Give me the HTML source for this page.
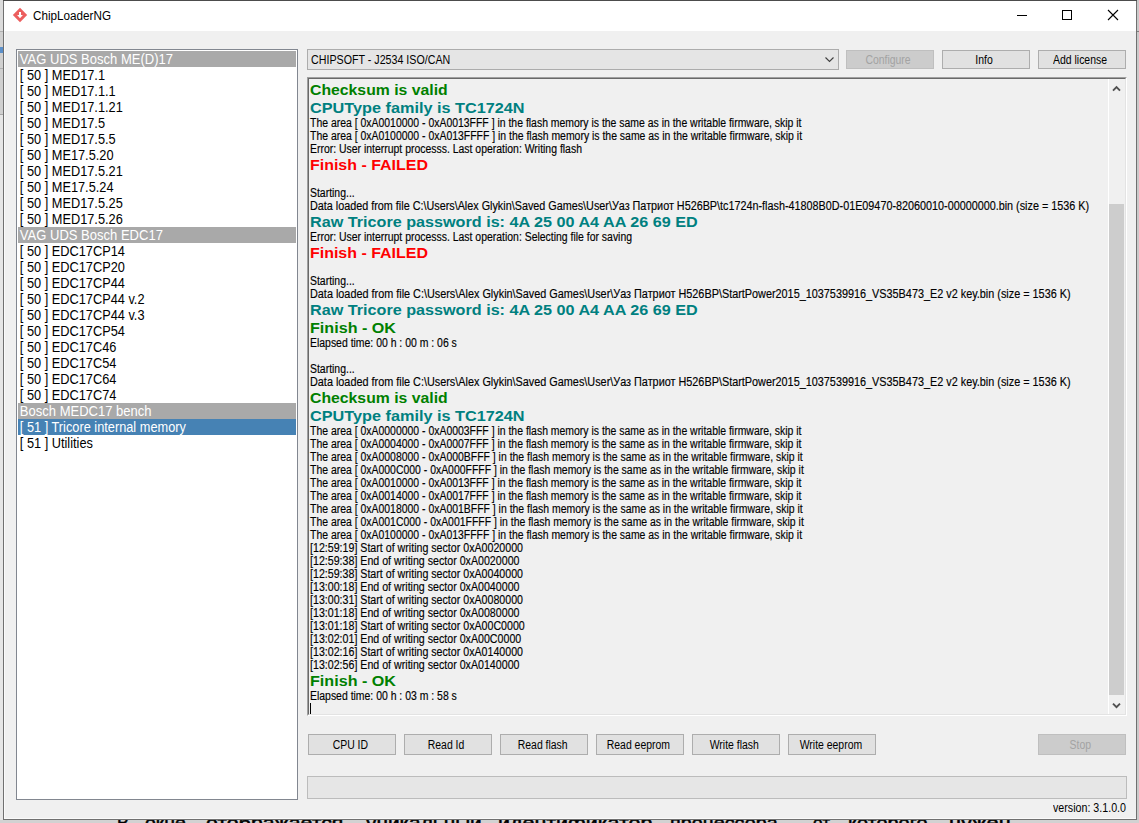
<!DOCTYPE html>
<html><head><meta charset="utf-8"><title>ChipLoaderNG</title><style>
*{margin:0;padding:0;box-sizing:border-box}
html,body{width:1139px;height:823px;overflow:hidden;background:#e4e4e4;font-family:"Liberation Sans",sans-serif}
.a{position:absolute}
.t{position:absolute;white-space:pre;transform-origin:0 0}
#win{position:absolute;left:3px;top:0;width:1134px;height:820px;border:1px solid #707070;background:#f0f0f0}
#title{position:absolute;left:4px;top:1px;width:1132px;height:30px;background:#fff}
.btn{position:absolute;height:21px;width:88px;background:#e1e1e1;border:1px solid #adadad;font-size:12px;color:#000;text-align:center;line-height:19px}
.btn span{display:inline-block;transform:scaleX(0.87);position:relative;left:-1.5px;top:1px}
.dis{background:#cccccc;border-color:#bfbfbf;color:#a3a3a3}
.li{position:absolute;left:18px;width:278px;height:16px;font-size:14px;line-height:16px;white-space:pre;color:#000}
.li span{display:inline-block;transform-origin:0 0;transform:scaleX(0.912);padding-left:2px}
.hd{background:#a9a9a9;color:#fff}
.hd span{transform:scaleX(0.93)}
.sel{background:#4682b4;color:#fff}
.ln{position:absolute;left:311px;white-space:pre;transform-origin:0 0}
.n{font-size:12px;line-height:13px;height:13px;color:#000;-webkit-text-stroke:0.15px #000}
.b{font-size:15px;font-weight:bold;line-height:18px;height:18px;letter-spacing:0px}
.g{color:#008000}.c{color:#008080}.r{color:#ff0000}
</style></head>
<body>
<div class="a" style="left:0;top:0;width:3px;height:823px;background:#e6e6e6"></div><div class="a" style="left:0;top:0;width:3px;height:31px;background:#dcdcdc"></div><div class="a" style="left:0;top:31px;width:3px;height:83px;background:#d0d0d0"></div><div class="a" style="left:0;top:31px;width:3px;height:1px;background:#b0b0b0"></div><div class="a" style="left:0;top:47px;width:3px;height:6px;background:#5b8fc9"></div><div class="a" style="left:0;top:68px;width:3px;height:1px;background:#b0b0b0"></div><div class="a" style="left:0;top:114px;width:3px;height:1px;background:#a8a8a8"></div><div class="a" style="left:1137px;top:0;width:2px;height:823px;background:#cacaca"></div><div class="a" style="left:1137px;top:31px;width:2px;height:1px;background:#808080"></div><div class="a" style="left:0;top:820px;width:1139px;height:3px;background:#d2d2d2"></div><div id="win"></div><div class="a" style="left:3px;top:0;width:1134px;height:1px;background:#4c4c4c"></div><div class="a" style="left:4px;top:818px;width:1132px;height:1px;background:#fafafa"></div><div class="a" style="left:4px;top:31px;width:1px;height:787px;background:#fafafa"></div><div id="title"></div><svg class="a" style="left:12px;top:7px" width="16" height="16" viewBox="0 0 16 16"><path d="M8 0.8 L15.2 8 L8 15.2 L0.8 8 Z" fill="#ec5e5e"/><path d="M7 5.1 H9 V8 H10.9 L8 11.3 L5.1 8 H7 Z" fill="#fff"/></svg><div class="t" style="left:33px;top:8px;font-size:12px;line-height:16px;color:#000;transform:scaleX(0.975)">ChipLoaderNG</div><div class="a" style="left:1017px;top:15px;width:10px;height:1px;background:#000"></div><div class="a" style="left:1062px;top:10px;width:10px;height:10px;border:1px solid #000"></div><svg class="a" style="left:1107px;top:9px" width="12" height="12" viewBox="0 0 12 12"><path d="M1 1 L11 11 M11 1 L1 11" stroke="#000" stroke-width="1.1"/></svg><div class="a" style="left:16px;top:49px;width:282px;height:751px;border:1px solid #828790;background:#fff"></div><div class="li hd" style="top:51px"><span>VAG UDS Bosch ME(D)17</span></div><div class="li " style="top:67px"><span>[ 50 ] MED17.1</span></div><div class="li " style="top:83px"><span>[ 50 ] MED17.1.1</span></div><div class="li " style="top:99px"><span>[ 50 ] MED17.1.21</span></div><div class="li " style="top:115px"><span>[ 50 ] MED17.5</span></div><div class="li " style="top:131px"><span>[ 50 ] MED17.5.5</span></div><div class="li " style="top:147px"><span>[ 50 ] ME17.5.20</span></div><div class="li " style="top:163px"><span>[ 50 ] MED17.5.21</span></div><div class="li " style="top:179px"><span>[ 50 ] ME17.5.24</span></div><div class="li " style="top:195px"><span>[ 50 ] MED17.5.25</span></div><div class="li " style="top:211px"><span>[ 50 ] MED17.5.26</span></div><div class="li hd" style="top:227px"><span>VAG UDS Bosch EDC17</span></div><div class="li " style="top:243px"><span>[ 50 ] EDC17CP14</span></div><div class="li " style="top:259px"><span>[ 50 ] EDC17CP20</span></div><div class="li " style="top:275px"><span>[ 50 ] EDC17CP44</span></div><div class="li " style="top:291px"><span>[ 50 ] EDC17CP44 v.2</span></div><div class="li " style="top:307px"><span>[ 50 ] EDC17CP44 v.3</span></div><div class="li " style="top:323px"><span>[ 50 ] EDC17CP54</span></div><div class="li " style="top:339px"><span>[ 50 ] EDC17C46</span></div><div class="li " style="top:355px"><span>[ 50 ] EDC17C54</span></div><div class="li " style="top:371px"><span>[ 50 ] EDC17C64</span></div><div class="li " style="top:387px"><span>[ 50 ] EDC17C74</span></div><div class="li hd" style="top:403px"><span>Bosch MEDC17 bench</span></div><div class="li sel" style="top:419px"><span>[ 51 ] Tricore internal memory</span></div><div class="li " style="top:435px"><span>[ 51 ] Utilities</span></div><div class="a" style="left:307px;top:49px;width:532px;height:21px;background:#e5e5e5;border:1px solid #acacac"></div><div class="t" style="left:311px;top:54px;font-size:12px;line-height:13px;color:#000;transform:scaleX(0.89)">CHIPSOFT - J2534 ISO/CAN</div><svg class="a" style="left:825px;top:57px" width="9" height="6" viewBox="0 0 9 6"><path d="M0.5 0.5 L4.5 4.5 L8.5 0.5" fill="none" stroke="#404040" stroke-width="1.1"/></svg><div class="btn dis" style="left:846px;top:50px;height:19px;line-height:17px"><span>Configure</span></div><div class="btn" style="left:942px;top:50px;height:19px;line-height:17px"><span>Info</span></div><div class="btn" style="left:1038px;top:50px;height:19px;line-height:17px"><span>Add license</span></div><div class="a" style="left:307px;top:77px;width:820px;height:639px;border-top:1px solid #a0a0a0;border-left:1px solid #a0a0a0;border-right:1px solid #fff;border-bottom:1px solid #fff"></div><div class="a" style="left:308px;top:78px;width:818px;height:637px;border-top:1px solid #696969;border-left:1px solid #696969;border-right:1px solid #e3e3e3;border-bottom:1px solid #e3e3e3;background:#f0f0f0"></div><div class="a" style="left:1108px;top:79px;width:1px;height:635px;background:#fff"></div><div class="a" style="left:1109px;top:204px;width:15px;height:491px;background:#cdcdcd"></div><svg class="a" style="left:1112px;top:84px" width="9" height="8" viewBox="0 0 9 8"><path d="M1 6.6 L4.5 3 L8 6.6" fill="none" stroke="#505050" stroke-width="1.9"/></svg><svg class="a" style="left:1112px;top:702px" width="9" height="8" viewBox="0 0 9 8"><path d="M1 1.6 L4.5 5.2 L8 1.6" fill="none" stroke="#505050" stroke-width="1.9"/></svg><div class="a" style="left:309px;top:79px;width:799px;height:635px;overflow:hidden"><div class="ln b g" style="left:1px;top:2.4px;transform:scaleX(1.052)">Checksum is valid</div><div class="ln b c" style="left:1px;top:20.4px;transform:scaleX(1.083)">CPUType family is TC1724N</div><div class="ln n" style="left:1px;top:38.4px;transform:scaleX(0.87)">The area [ 0xA0010000 - 0xA0013FFF ] in the flash memory is the same as in the writable firmware, skip it</div><div class="ln n" style="left:1px;top:51.4px;transform:scaleX(0.87)">The area [ 0xA0100000 - 0xA013FFFF ] in the flash memory is the same as in the writable firmware, skip it</div><div class="ln n" style="left:1px;top:64.4px;transform:scaleX(0.87)">Error: User interrupt processs. Last operation: Writing flash</div><div class="ln b r" style="left:1px;top:77.4px;transform:scaleX(1.064)">Finish - FAILED</div><div class="ln n" style="left:1px;top:108.4px;transform:scaleX(0.87)">Starting...</div><div class="ln n" style="left:1px;top:121.4px;transform:scaleX(0.9)">Data loaded from file C:\Users\Alex Glykin\Saved Games\User\Уаз Патриот H526BP\tc1724n-flash-41808B0D-01E09470-82060010-00000000.bin (size = 1536 K)</div><div class="ln b c" style="left:1px;top:134.4px;transform:scaleX(1.078)">Raw Tricore password is: 4A 25 00 A4 AA 26 69 ED</div><div class="ln n" style="left:1px;top:152.4px;transform:scaleX(0.87)">Error: User interrupt processs. Last operation: Selecting file for saving</div><div class="ln b r" style="left:1px;top:165.4px;transform:scaleX(1.064)">Finish - FAILED</div><div class="ln n" style="left:1px;top:196.4px;transform:scaleX(0.87)">Starting...</div><div class="ln n" style="left:1px;top:209.4px;transform:scaleX(0.904)">Data loaded from file C:\Users\Alex Glykin\Saved Games\User\Уаз Патриот H526BP\StartPower2015_1037539916_VS35B473_E2 v2 key.bin (size = 1536 K)</div><div class="ln b c" style="left:1px;top:222.4px;transform:scaleX(1.078)">Raw Tricore password is: 4A 25 00 A4 AA 26 69 ED</div><div class="ln b g" style="left:1px;top:240.4px;transform:scaleX(1.075)">Finish - OK</div><div class="ln n" style="left:1px;top:258.4px;transform:scaleX(0.87)">Elapsed time: 00 h : 00 m : 06 s</div><div class="ln n" style="left:1px;top:284.4px;transform:scaleX(0.87)">Starting...</div><div class="ln n" style="left:1px;top:297.4px;transform:scaleX(0.904)">Data loaded from file C:\Users\Alex Glykin\Saved Games\User\Уаз Патриот H526BP\StartPower2015_1037539916_VS35B473_E2 v2 key.bin (size = 1536 K)</div><div class="ln b g" style="left:1px;top:310.4px;transform:scaleX(1.052)">Checksum is valid</div><div class="ln b c" style="left:1px;top:328.4px;transform:scaleX(1.083)">CPUType family is TC1724N</div><div class="ln n" style="left:1px;top:346.4px;transform:scaleX(0.87)">The area [ 0xA0000000 - 0xA0003FFF ] in the flash memory is the same as in the writable firmware, skip it</div><div class="ln n" style="left:1px;top:359.4px;transform:scaleX(0.87)">The area [ 0xA0004000 - 0xA0007FFF ] in the flash memory is the same as in the writable firmware, skip it</div><div class="ln n" style="left:1px;top:372.4px;transform:scaleX(0.87)">The area [ 0xA0008000 - 0xA000BFFF ] in the flash memory is the same as in the writable firmware, skip it</div><div class="ln n" style="left:1px;top:385.4px;transform:scaleX(0.87)">The area [ 0xA000C000 - 0xA000FFFF ] in the flash memory is the same as in the writable firmware, skip it</div><div class="ln n" style="left:1px;top:398.4px;transform:scaleX(0.87)">The area [ 0xA0010000 - 0xA0013FFF ] in the flash memory is the same as in the writable firmware, skip it</div><div class="ln n" style="left:1px;top:411.4px;transform:scaleX(0.87)">The area [ 0xA0014000 - 0xA0017FFF ] in the flash memory is the same as in the writable firmware, skip it</div><div class="ln n" style="left:1px;top:424.4px;transform:scaleX(0.87)">The area [ 0xA0018000 - 0xA001BFFF ] in the flash memory is the same as in the writable firmware, skip it</div><div class="ln n" style="left:1px;top:437.4px;transform:scaleX(0.87)">The area [ 0xA001C000 - 0xA001FFFF ] in the flash memory is the same as in the writable firmware, skip it</div><div class="ln n" style="left:1px;top:450.4px;transform:scaleX(0.87)">The area [ 0xA0100000 - 0xA013FFFF ] in the flash memory is the same as in the writable firmware, skip it</div><div class="ln n" style="left:1px;top:463.4px;transform:scaleX(0.887)">[12:59:19] Start of writing sector 0xA0020000</div><div class="ln n" style="left:1px;top:476.4px;transform:scaleX(0.887)">[12:59:38] End of writing sector 0xA0020000</div><div class="ln n" style="left:1px;top:489.4px;transform:scaleX(0.887)">[12:59:38] Start of writing sector 0xA0040000</div><div class="ln n" style="left:1px;top:502.4px;transform:scaleX(0.887)">[13:00:18] End of writing sector 0xA0040000</div><div class="ln n" style="left:1px;top:515.4px;transform:scaleX(0.887)">[13:00:31] Start of writing sector 0xA0080000</div><div class="ln n" style="left:1px;top:528.4px;transform:scaleX(0.887)">[13:01:18] End of writing sector 0xA0080000</div><div class="ln n" style="left:1px;top:541.4px;transform:scaleX(0.887)">[13:01:18] Start of writing sector 0xA00C0000</div><div class="ln n" style="left:1px;top:554.4px;transform:scaleX(0.887)">[13:02:01] End of writing sector 0xA00C0000</div><div class="ln n" style="left:1px;top:567.4px;transform:scaleX(0.887)">[13:02:16] Start of writing sector 0xA0140000</div><div class="ln n" style="left:1px;top:580.4px;transform:scaleX(0.887)">[13:02:56] End of writing sector 0xA0140000</div><div class="ln b g" style="left:1px;top:593.4px;transform:scaleX(1.075)">Finish - OK</div><div class="ln n" style="left:1px;top:611.4px;transform:scaleX(0.87)">Elapsed time: 00 h : 03 m : 58 s</div><div class="a" style="left:1px;top:624px;width:1px;height:11px;background:#000"></div></div><div class="btn" style="left:308px;top:734px"><span>CPU ID</span></div><div class="btn" style="left:404px;top:734px"><span>Read Id</span></div><div class="btn" style="left:500px;top:734px"><span>Read flash</span></div><div class="btn" style="left:596px;top:734px"><span>Read eeprom</span></div><div class="btn" style="left:692px;top:734px"><span>Write flash</span></div><div class="btn" style="left:788px;top:734px"><span>Write eeprom</span></div><div class="btn dis" style="left:1038px;top:734px"><span>Stop</span></div><div class="a" style="left:307px;top:776px;width:820px;height:23px;background:#e6e6e6;border:1px solid #bcbcbc"></div><div class="t" style="left:1053px;top:802px;font-size:12px;line-height:13px;color:#000;transform:scaleX(0.89)">version: 3.1.0.0</div><div class="a" style="left:0;top:820px;width:1139px;height:3px;overflow:hidden"><div class="t" style="left:117px;top:-9px;font-size:21px;line-height:24px;color:#000;-webkit-text-stroke:0.6px #000;width:10px;overflow:visible"><span style="display:inline-block;transform-origin:0 0;transform:scaleX(0.862)">В</span></div><div class="t" style="left:145px;top:-9px;font-size:21px;line-height:24px;color:#000;-webkit-text-stroke:0.6px #000;width:43px;overflow:visible"><span style="display:inline-block;transform-origin:0 0;transform:scaleX(0.927)">окне</span></div><div class="t" style="left:206px;top:-9px;font-size:21px;line-height:24px;color:#000;-webkit-text-stroke:0.6px #000;width:141px;overflow:visible"><span style="display:inline-block;transform-origin:0 0;transform:scaleX(1.013)">отображается</span></div><div class="t" style="left:366px;top:-9px;font-size:21px;line-height:24px;color:#000;-webkit-text-stroke:0.6px #000;width:115px;overflow:visible"><span style="display:inline-block;transform-origin:0 0;transform:scaleX(0.991)">уникальный</span></div><div class="t" style="left:498px;top:-9px;font-size:21px;line-height:24px;color:#000;-webkit-text-stroke:0.6px #000;width:154px;overflow:visible"><span style="display:inline-block;transform-origin:0 0;transform:scaleX(1.021)">идентификатор</span></div><div class="t" style="left:670px;top:-9px;font-size:21px;line-height:24px;color:#000;-webkit-text-stroke:0.6px #000;width:120px;overflow:visible"><span style="display:inline-block;transform-origin:0 0;transform:scaleX(0.940)">процессора,</span></div><div class="t" style="left:813px;top:-9px;font-size:21px;line-height:24px;color:#000;-webkit-text-stroke:0.6px #000;width:19px;overflow:visible"><span style="display:inline-block;transform-origin:0 0;transform:scaleX(0.819)">от</span></div><div class="t" style="left:848px;top:-9px;font-size:21px;line-height:24px;color:#000;-webkit-text-stroke:0.6px #000;width:88px;overflow:visible"><span style="display:inline-block;transform-origin:0 0;transform:scaleX(0.948)">которого</span></div><div class="t" style="left:949px;top:-9px;font-size:21px;line-height:24px;color:#000;-webkit-text-stroke:0.6px #000;width:60px;overflow:visible"><span style="display:inline-block;transform-origin:0 0;transform:scaleX(1.034)">нужен</span></div></div>
</body></html>
